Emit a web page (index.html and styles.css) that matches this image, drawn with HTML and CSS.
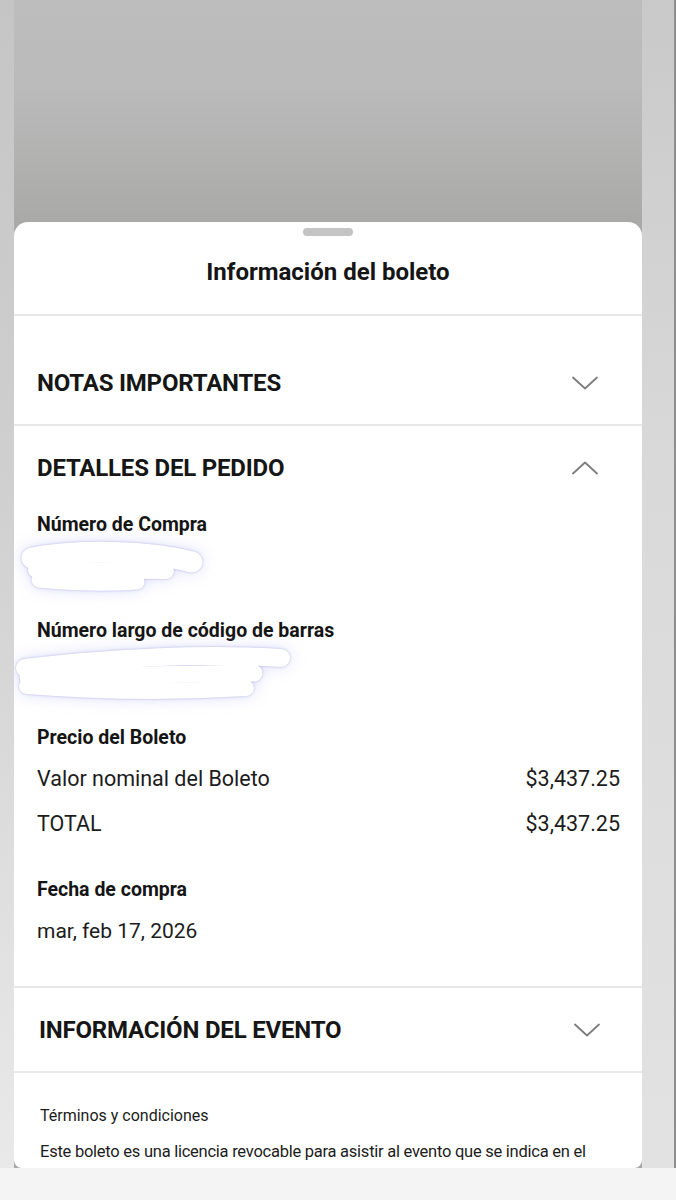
FILE: index.html
```html
<!DOCTYPE html>
<html lang="es">
<head>
<meta charset="utf-8">
<title>Información del boleto</title>
<link rel="stylesheet" href="styles.css">
</head>
<body>
<div class="device">
  <div class="stage">
    <div class="gutter gutter-left"></div>
    <div class="backdrop">
      <div class="sheet">
        <div class="handle"></div>
        <h1 class="sheet-title">Información del boleto</h1>

        <section class="acc acc-notas">
          <div class="acc-head">
            <h2 class="acc-title">NOTAS IMPORTANTES</h2>
            <svg class="chev" width="26" height="14" viewBox="0 0 26 14"><path d="M1 1.5 L13 12.5 L25 1.5"/></svg>
          </div>
        </section>

        <section class="acc acc-detalles">
          <div class="acc-head">
            <h2 class="acc-title">DETALLES DEL PEDIDO</h2>
            <svg class="chev" width="26" height="14" viewBox="0 0 26 14"><path d="M1 12.5 L13 1.5 L25 12.5"/></svg>
          </div>
          <div class="acc-body">
            <h3 class="label">Número de Compra</h3>
            <svg class="scribble scribble-1" width="320" height="82" viewBox="0 0 320 82">
              <path d="M18 21 C66 12 136 14 178 25" stroke-width="21"/>
              <path d="M22 33 L152 34" stroke-width="16"/>
              <path d="M25 43 C66 47 96 47 123 45" stroke-width="15"/>
            </svg>
            <h3 class="label">Número largo de código de barras</h3>
            <svg class="scribble scribble-2" width="320" height="83" viewBox="0 0 320 83">
              <path d="M11 25 C90 15 190 10 267 15" stroke-width="18"/>
              <path d="M14 34 L240 30" stroke-width="17"/>
              <path d="M13 43 C90 49 170 49 232 45" stroke-width="16"/>
            </svg>
            <h3 class="label">Precio del Boleto</h3>
            <div class="row row-first"><span>Valor nominal del Boleto</span><span>$3,437.25</span></div>
            <div class="row"><span>TOTAL</span><span>$3,437.25</span></div>
            <h3 class="label label-gap">Fecha de compra</h3>
            <p class="value">mar, feb 17, 2026</p>
          </div>
        </section>

        <section class="acc acc-evento">
          <div class="acc-head">
            <h2 class="acc-title">INFORMACIÓN DEL EVENTO</h2>
            <svg class="chev" width="26" height="14" viewBox="0 0 26 14"><path d="M1 1.5 L13 12.5 L25 1.5"/></svg>
          </div>
        </section>

        <div class="terms">
          <p class="terms-title">Términos y condiciones</p>
          <p class="terms-text">Este boleto es una licencia revocable para asistir al evento que se indica en el formato del boleto y está sujeto a los términos y condiciones aplicables.</p>
        </div>
      </div>
    </div>
    <div class="gutter gutter-right"></div>
  </div>
  <div class="home-strip"></div>
</div>
</body>
</html>
```

FILE: styles.css
```css
* { box-sizing: border-box; }
html, body { margin: 0; padding: 0; }
body {
  font-family: Roboto, "Liberation Sans", sans-serif;
  color: #151515;
  background: #f4f4f4;
}
.device {
  width: 676px;
  height: 1200px;
  overflow: hidden;
  display: flex;
  flex-direction: column;
}
.stage {
  height: 1168px;
  flex: 0 0 1168px;
  display: flex;
}
.gutter { flex: 0 0 auto; }
.gutter-left {
  width: 14px;
  background: linear-gradient(#c5c5c5, #cfcfcf 40%, #e9e9e9);
}
.gutter-right {
  width: 34px;
  background: linear-gradient(#c9c9c9, #d9d9d9 40%, #e2e2e2);
  border-right: 2px solid #8e8e8e;
}
.backdrop {
  flex: 0 0 628px;
  min-width: 0;
  padding-top: 222px;
  background: linear-gradient(#bdbdbd 0, #bababa 90px, #a9aaa8 222px, #a8a8a8 100%);
}
.sheet {
  height: 946px;
  background: #fff;
  border-radius: 14px 14px 8px 8px;
  overflow: hidden;
}
.handle {
  width: 50px;
  height: 8px;
  margin: 6px auto 0;
  border-radius: 4px;
  background: #c4c4c4;
}
.sheet-title {
  margin: 22px 0 0;
  padding-bottom: 28px;
  font-size: 24px;
  line-height: 28px;
  font-weight: 700;
  text-align: center;
  border-bottom: 2px solid #e8e8e8;
}
.acc {
  border-bottom: 2px solid #e8e8e8;
}
.acc-head {
  display: flex;
  align-items: center;
  justify-content: space-between;
  padding: 28px 44px 27px 23px;
}
.acc-notas .acc-head { padding-top: 53px; padding-bottom: 27px; }
.acc-detalles .acc-head { padding-bottom: 0; }
.acc-evento .acc-head { padding-top: 28px; padding-bottom: 27px; padding-left: 25px; padding-right: 42px; }
.acc-title {
  margin: 0;
  font-size: 24px;
  line-height: 28px;
  font-weight: 700;
  color: #161616;
  letter-spacing: -0.2px;
}
.chev { display: block; }
.chev path {
  fill: none;
  stroke: #7d7d7d;
  stroke-width: 1.8;
  stroke-linecap: round;
  stroke-linejoin: round;
}
.acc-body {
  padding: 31px 22px 41px 23px;
}
.label {
  margin: 0;
  font-size: 19.5px;
  line-height: 24px;
  font-weight: 700;
  color: #151515;
}
.label-gap { margin-top: 40px; }
.scribble {
  display: block;
  margin-left: -23px;
  overflow: visible;
  filter: drop-shadow(0 0 1px rgba(120, 120, 200, 0.5)) drop-shadow(0 0 7px rgba(185, 185, 250, 0.5));
}
.scribble path {
  fill: none;
  stroke: #fff;
  stroke-linecap: round;
  stroke-linejoin: round;
}
.row {
  display: flex;
  justify-content: space-between;
  margin-top: 17px;
  font-size: 21.5px;
  line-height: 28px;
  color: #1c1c1c;
}
.row-first { margin-top: 15px; }
.value {
  margin: 15px 0 0;
  font-size: 21px;
  line-height: 28px;
  color: #1c1c1c;
}
.terms {
  padding: 32px 30px 0 26px;
}
.terms-title {
  margin: 0;
  font-size: 16px;
  line-height: 22px;
  color: #1c1c1c;
}
.terms-text {
  margin: 13px 0 0;
  font-size: 16.5px;
  line-height: 24px;
  letter-spacing: -0.25px;
  color: #1c1c1c;
}
.home-strip {
  flex: 1;
  background: #f4f4f4;
}
```
